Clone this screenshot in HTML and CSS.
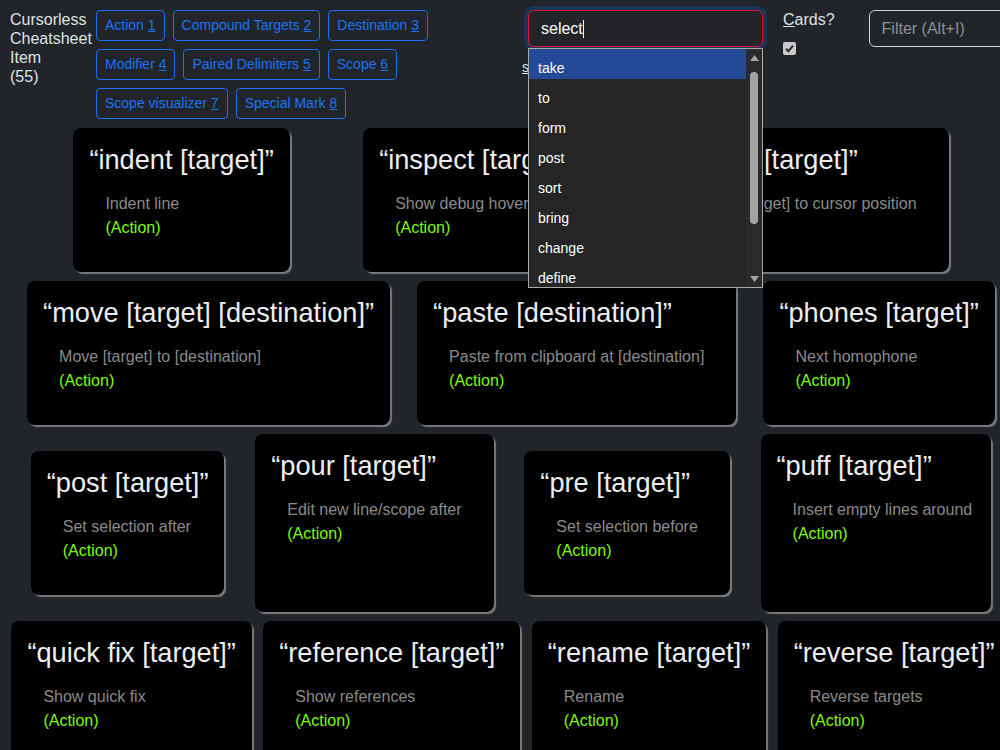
FILE: index.html
```html
<!DOCTYPE html>
<html lang="en">
<head>
    <meta charset="UTF-8">
    <meta name="viewport" content="width=device-width, initial-scale=1.0">
    <title>Cursorless Cheatsheet</title>
    <link rel="stylesheet" href="styles.css">
</head>
<body>
<div class="page">
    <header class="topbar">
        <div class="brand">Cursorless Cheatsheet Item (55)</div>

        <nav class="cats">
            <button class="cat">Action <u>1</u></button>
            <button class="cat">Compound Targets <u>2</u></button>
            <button class="cat">Destination <u>3</u></button>
            <button class="cat">Modifier <u>4</u></button>
            <button class="cat">Paired Delimiters <u>5</u></button>
            <button class="cat">Scope <u>6</u></button>
            <button class="cat">Scope visualizer <u>7</u></button>
            <button class="cat">Special Mark <u>8</u></button>
        </nav>

        <div class="search">
            <input class="search-box" type="text" value="select">
            <span class="caret"></span>
            <div class="search-hint"><u>s</u>poken form</div>
            <!-- suggestion popup -->
            <div class="suggest">
                <ul class="suggest-list">
                    <li class="active">take</li>
                    <li>to</li>
                    <li>form</li>
                    <li>post</li>
                    <li>sort</li>
                    <li>bring</li>
                    <li>change</li>
                    <li>define</li>
                </ul>
                <div class="suggest-bar">
                    <svg class="arrow" width="9" height="6" viewBox="0 0 9 6"><path d="M0 6 L4.5 0 L9 6 Z" fill="#a3a3a3"/></svg>
                    <div class="thumb"></div>
                    <svg class="arrow arrow-down" width="9" height="6" viewBox="0 0 9 6"><path d="M0 0 L9 0 L4.5 6 Z" fill="#a3a3a3"/></svg>
                </div>
            </div>
        </div>

        <label class="cards-toggle">
            <span><u>C</u>ards?</span>
            <span class="check">
                <svg width="13" height="13" viewBox="0 0 13 13"><path d="M3 6.8 L5.4 9.2 L10 3.6" fill="none" stroke="#2a2a2a" stroke-width="2"/></svg>
            </span>
        </label>

        <input class="filter" type="text" placeholder="Filter (Alt+I)">
    </header>

    <main class="deck">
        <div class="card">
            <h3 class="phrase">“indent [target]”</h3>
            <p class="desc">Indent line<br><span class="kind">(Action)</span></p>
        </div>
        <div class="card">
            <h3 class="phrase">“inspect [target]”</h3>
            <p class="desc">Show debug hover<br><span class="kind">(Action)</span></p>
        </div>
        <div class="card">
            <h3 class="phrase">“move [target]”</h3>
            <p class="desc">Move [target] to cursor position<br><span class="kind">(Action)</span></p>
        </div>
        <div class="card">
            <h3 class="phrase">“move [target] [destination]”</h3>
            <p class="desc">Move [target] to [destination]<br><span class="kind">(Action)</span></p>
        </div>
        <div class="card">
            <h3 class="phrase">“paste [destination]”</h3>
            <p class="desc">Paste from clipboard at [destination]<br><span class="kind">(Action)</span></p>
        </div>
        <div class="card">
            <h3 class="phrase">“phones [target]”</h3>
            <p class="desc">Next homophone<br><span class="kind">(Action)</span></p>
        </div>
        <div class="card">
            <h3 class="phrase">“post [target]”</h3>
            <p class="desc">Set selection after<br><span class="kind">(Action)</span></p>
        </div>
        <div class="card tall">
            <h3 class="phrase">“pour [target]”</h3>
            <p class="desc">Edit new line/scope after<br><span class="kind">(Action)</span></p>
        </div>
        <div class="card">
            <h3 class="phrase">“pre [target]”</h3>
            <p class="desc">Set selection before<br><span class="kind">(Action)</span></p>
        </div>
        <div class="card tall snug">
            <h3 class="phrase">“puff [target]”</h3>
            <p class="desc">Insert empty lines around<br><span class="kind">(Action)</span></p>
        </div>
        <div class="card">
            <h3 class="phrase">“quick fix [target]”</h3>
            <p class="desc">Show quick fix<br><span class="kind">(Action)</span></p>
        </div>
        <div class="card">
            <h3 class="phrase">“reference [target]”</h3>
            <p class="desc">Show references<br><span class="kind">(Action)</span></p>
        </div>
        <div class="card">
            <h3 class="phrase">“rename [target]”</h3>
            <p class="desc">Rename<br><span class="kind">(Action)</span></p>
        </div>
        <div class="card">
            <h3 class="phrase">“reverse [target]”</h3>
            <p class="desc">Reverse targets<br><span class="kind">(Action)</span></p>
        </div>
    </main>
</div>
</body>
</html>
```

FILE: styles.css
```css
html, body {
    margin: 0;
    background: #212529;
    overflow: hidden;
}
body {
    font-family: "Liberation Sans", Arial, sans-serif;
    color: #dee2e6;
}
.page {
    width: 1022px;
}

/* top bar */
.topbar {
    display: flex;
    align-items: flex-start;
    padding: 10px 0 0 10px;
}
.brand {
    flex: none;
    width: 60px;
    margin-right: 26px;
    font-size: 16px;
    line-height: 19px;
}
.cats {
    display: flex;
    flex-wrap: wrap;
    gap: 8px;
    width: 340px;
}
.cat {
    font-family: inherit;
    font-size: 14px;
    line-height: 21px;
    padding: 4px 8px;
    color: #1a73f5;
    background: none;
    border: 1px solid #1a6ef0;
    border-radius: 4px;
    cursor: pointer;
}
.search {
    position: relative;
    width: 235px;
    margin-left: 92px;
}
.search-box {
    display: block;
    box-sizing: border-box;
    width: 100%;
    height: 37px;
    padding: 0 12px;
    font-family: inherit;
    font-size: 16px;
    color: #fff;
    background: #222428;
    border: 1px solid #dc1537;
    border-radius: 6px;
    box-shadow: 0 0 0 4px #1c3458;
    outline: none;
}
.caret {
    position: absolute;
    top: 10px;
    left: 55px;
    width: 1px;
    height: 18px;
    background: #fff;
}
.search-hint {
    margin: 12px 0 0 -6px;
    font-size: 14px;
    color: #dee2e6;
}
.suggest {
    position: absolute;
    top: 38px;
    left: 0;
    z-index: 10;
    display: flex;
    box-sizing: border-box;
    width: 235px;
    height: 240px;
    background: #252525;
    border: 1px solid #a9a9a9;
    overflow: hidden;
}
.suggest-list {
    flex: 1;
    margin: 0;
    padding: 0;
    list-style: none;
}
.suggest-list li {
    box-sizing: border-box;
    height: 30px;
    padding: 6px 0 0 9px;
    line-height: 26px;
    font-size: 14px;
    color: #fff;
}
.suggest-list li.active {
    background: #244a96;
}
.suggest-bar {
    display: flex;
    flex-direction: column;
    align-items: center;
    width: 16px;
    background: #2a2a2a;
}
.arrow {
    margin-top: 6px;
}
.thumb {
    width: 8px;
    height: 152px;
    margin-top: 11px;
    background: #a3a3a3;
    border-radius: 4px;
}
.arrow-down {
    margin-top: auto;
    margin-bottom: 5px;
}
.cards-toggle {
    display: flex;
    flex-direction: column;
    margin-left: 20px;
    font-size: 16px;
    line-height: 19px;
}
.check {
    display: block;
    width: 13px;
    height: 13px;
    margin-top: 13px;
    background: #c9c9c9;
    border-radius: 2px;
}
.check svg {
    display: block;
}
.filter {
    box-sizing: border-box;
    width: 150px;
    height: 37px;
    margin-left: 34px;
    padding: 0 12px;
    font-family: inherit;
    font-size: 16px;
    color: #dee2e6;
    background: #212529;
    border: 1px solid #cfd2d6;
    border-radius: 6px;
}
.filter::placeholder {
    color: #8d9094;
}

/* cards */
.deck {
    display: flex;
    flex-wrap: wrap;
    justify-content: space-evenly;
    align-items: center;
    row-gap: 9px;
    margin-top: 9px;
}
.card {
    box-sizing: border-box;
    padding: 16px 16px 32px;
    background: #000;
    border-radius: 8px;
    box-shadow: 2px 2px 1px #7a7a7a;
}
.card.tall {
    min-height: 178px;
}
.phrase {
    margin: 0 0 16px;
    font-size: 27.2px;
    line-height: 32px;
    font-weight: normal;
    color: #eceef0;
    white-space: nowrap;
}
.desc {
    margin: 0 16px;
    font-size: 16px;
    line-height: 24px;
    color: #8a8a8a;
    white-space: nowrap;
}
.card.snug .desc {
    margin-right: 3px;
}
.kind {
    color: #7cfc00;
}
```
